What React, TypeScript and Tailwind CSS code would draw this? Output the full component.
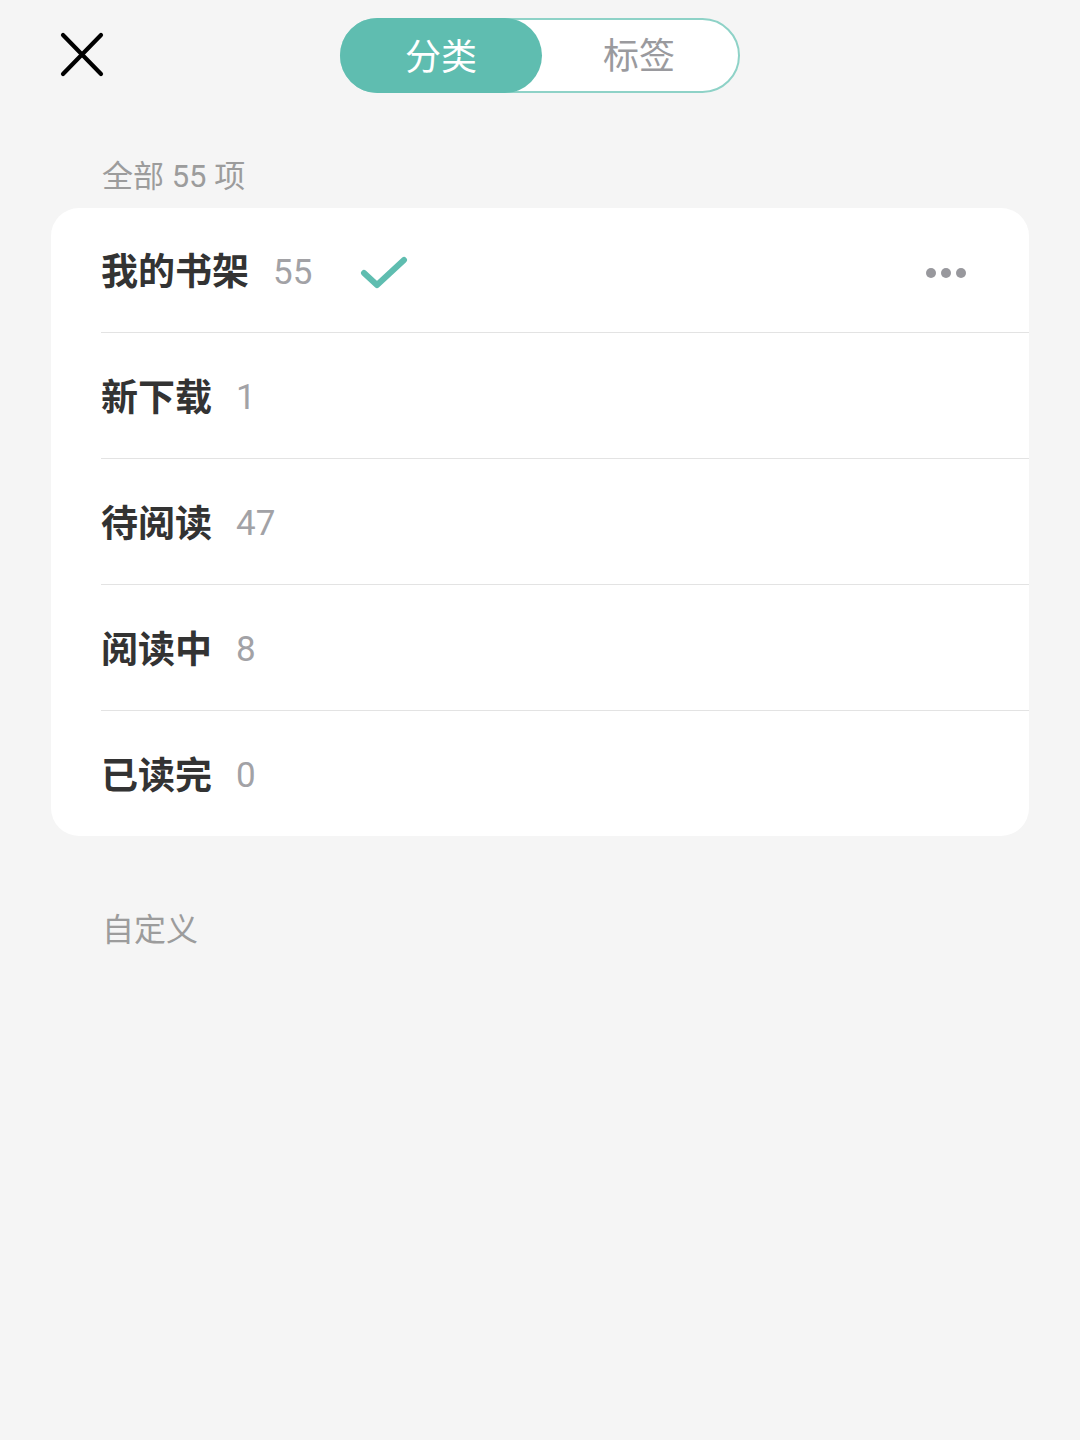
const shelves = [
  { name: '我的书架', count: 55, active: true },
  { name: '新下载', count: 1 },
  { name: '待阅读', count: 47 },
  { name: '阅读中', count: 8 },
  { name: '已读完', count: 0 },
];

const font = { fontFamily: 'Roboto, "Noto Sans CJK SC", "Noto Sans", sans-serif' };

export default function App() {
  return (
    <div className="min-h-[1440px] w-[1080px] bg-[#f5f5f5]" style={font}>
      {/* header: close + segmented tabs */}
      <div className="relative flex h-[110px] items-start justify-center pt-[18px]">
        <button className="absolute left-[60px] top-[32px]">
          <svg width="44" height="45" viewBox="0 0 44 45" fill="none">
            <path d="M3 3 L41 42 M41 3 L3 42" stroke="#000" strokeWidth="4.2" strokeLinecap="round" />
          </svg>
        </button>
        <div className="flex h-[75px] w-[400px] rounded-full border-2 border-[#8ed2c7] bg-white">
          <div className="-m-[2px] flex h-[75px] w-[202px] items-center justify-center rounded-full bg-[#5fbdb0] pt-[4px] text-[36px] text-white">
            分类
          </div>
          <div className="flex flex-1 items-center justify-center pt-[2px] text-[36px] text-[#9a9a9e]">
            标签
          </div>
        </div>
      </div>

      <div className="pl-[102px] pt-[47px] text-[31px] leading-[40px] text-[#9c9c9c]">全部 55 项</div>

      <div className="mx-[51px] mt-[11px] overflow-hidden rounded-[28px] bg-white">
        {shelves.map((s, i) => (
          <div key={s.name} className="pl-[50px]">
            <div
              className={`flex items-center pr-[63px] pt-[6px] ${i > 0 ? 'h-[126px] border-t border-[#e3e3e3]' : 'h-[124px]'}`}
            >
              <span className="text-[37px] font-semibold text-[#333333]">{s.name}</span>
              <span className="ml-[24px] text-[35px] text-[#a2a2a6]">{s.count}</span>
              {s.active && (
                <svg className="ml-[48px]" width="48" height="34" viewBox="0 0 48 34" fill="none">
                  <path d="M4 17 L17 29 L44 4" stroke="#5fbdb0" strokeWidth="6" strokeLinecap="round" strokeLinejoin="round" />
                </svg>
              )}
              {s.active && (
                <div className="ml-auto flex gap-[5px]">
                  <span className="h-[10px] w-[10px] rounded-full bg-[#98989d]" />
                  <span className="h-[10px] w-[10px] rounded-full bg-[#98989d]" />
                  <span className="h-[10px] w-[10px] rounded-full bg-[#98989d]" />
                </div>
              )}
            </div>
          </div>
        ))}
      </div>

      <div className="pl-[102px] pt-[72px] text-[32px] leading-[44px] text-[#9c9c9c]">自定义</div>
    </div>
  );
}
